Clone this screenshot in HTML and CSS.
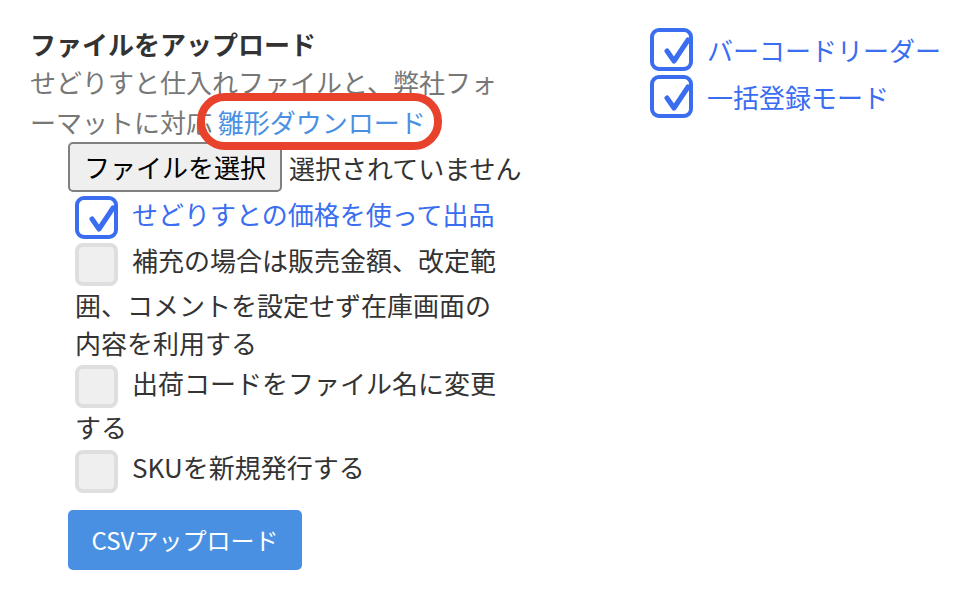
FILE: index.html
```html
<!DOCTYPE html>
<html>
<head>
    <title>ファイルをアップロード</title>
    <link rel="stylesheet" href="styles.css">
</head>
<body>
    <div class="page">
        <div class="upload-panel">
            <h3 class="title">ファイルをアップロード</h3>
            <p class="description">せどりすと仕入れファイルと、弊社フォーマットに対応 <span class="template-link">雛形ダウンロード</span></p>

            <div class="file-row">
                <span class="file-button">ファイルを選択</span>
                <span class="file-name">選択されていません</span>
            </div>

            <div class="options">
                <label class="option checked">
                    <span class="checkbox">
                        <svg viewBox="0 0 43 43" width="43" height="43"><rect x="2" y="2" width="39" height="39" rx="7" fill="#fff" stroke="#3a6df0" stroke-width="4"/><path d="M17 23 L24 33 L38 12" fill="none" stroke="#3a6df0" stroke-width="5" stroke-linecap="round" stroke-linejoin="round"/></svg>
                    </span>せどりすとの価格を使って出品
                </label>
                <label class="option">
                    <span class="checkbox empty"></span>補充の場合は販売金額、改定範囲、コメントを設定せず在庫画面の内容を利用する
                </label>
                <label class="option">
                    <span class="checkbox empty"></span>出荷コードをファイル名に変更する
                </label>
                <label class="option">
                    <span class="checkbox empty"></span>SKUを新規発行する
                </label>
            </div>

            <button class="upload-button">CSVアップロード</button>
        </div>

        <div class="mode-panel">
            <label class="mode checked">
                <span class="checkbox">
                    <svg viewBox="0 0 43 43" width="43" height="43"><rect x="2" y="2" width="39" height="39" rx="7" fill="#fff" stroke="#3a6df0" stroke-width="4"/><path d="M17 23 L24 33 L38 12" fill="none" stroke="#3a6df0" stroke-width="5" stroke-linecap="round" stroke-linejoin="round"/></svg>
                </span>バーコードリーダー
            </label>
            <label class="mode checked">
                <span class="checkbox">
                    <svg viewBox="0 0 43 43" width="43" height="43"><rect x="2" y="2" width="39" height="39" rx="7" fill="#fff" stroke="#3a6df0" stroke-width="4"/><path d="M17 23 L24 33 L38 12" fill="none" stroke="#3a6df0" stroke-width="5" stroke-linecap="round" stroke-linejoin="round"/></svg>
                </span>一括登録モード
            </label>
        </div>
    </div>
</body>
</html>
```

FILE: styles.css
```css
body {
    margin: 0;
    font-family: "Noto Sans CJK JP", "Noto Sans", sans-serif;
    font-size: 26px;
    color: #333;
    background: #fff;
}
.page {
    display: flex;
    padding: 26px 0 0 30px;
}
.upload-panel {
    width: 480px;
}
.title {
    margin: 0;
    font-size: 26px;
    line-height: 36px;
    font-weight: bold;
    color: #333;
}
.description {
    margin: 0;
    line-height: 40px;
    color: #777;
}
.template-link {
    position: relative;
    color: #4a90e2;
}
.template-link::after {
    content: "";
    position: absolute;
    left: -21px;
    right: -16px;
    top: -10px;
    bottom: -10px;
    border: 8px solid #e8412c;
    border-radius: 28px;
}
.file-row {
    display: flex;
    align-items: center;
    margin-left: 38px;
    white-space: nowrap;
}
.file-button {
    display: inline-block;
    height: 50px;
    line-height: 46px;
    padding: 0 14px;
    box-sizing: border-box;
    border: 2px solid #808080;
    border-radius: 5px;
    background: #efefef;
    color: #000;
}
.file-name {
    margin-left: 7px;
    color: #333;
}
.options {
    margin: 3px 0 0 45px;
}
.option {
    display: block;
    line-height: 38px;
    margin-bottom: 2px;
}
.option.checked {
    color: #3a6df0;
}
.checkbox {
    display: inline-block;
    width: 43px;
    height: 43px;
    margin-right: 14px;
    vertical-align: middle;
}
.checkbox svg {
    display: block;
}
.checkbox.empty {
    box-sizing: border-box;
    border: 4px solid #dedede;
    border-radius: 8px;
    background: #efefef;
}
.upload-button {
    margin: 15px 0 0 38px;
    width: 234px;
    height: 60px;
    border: none;
    border-radius: 5px;
    background: #4a90e2;
    color: #fff;
    font-family: inherit;
    font-size: 24px;
}
.mode-panel {
    margin-left: 140px;
    padding-top: 2px;
}
.mode {
    display: flex;
    align-items: center;
    height: 43px;
    margin-bottom: 4px;
    color: #3a6df0;
}
.mode .checkbox {
    margin-right: 14px;
}
```
